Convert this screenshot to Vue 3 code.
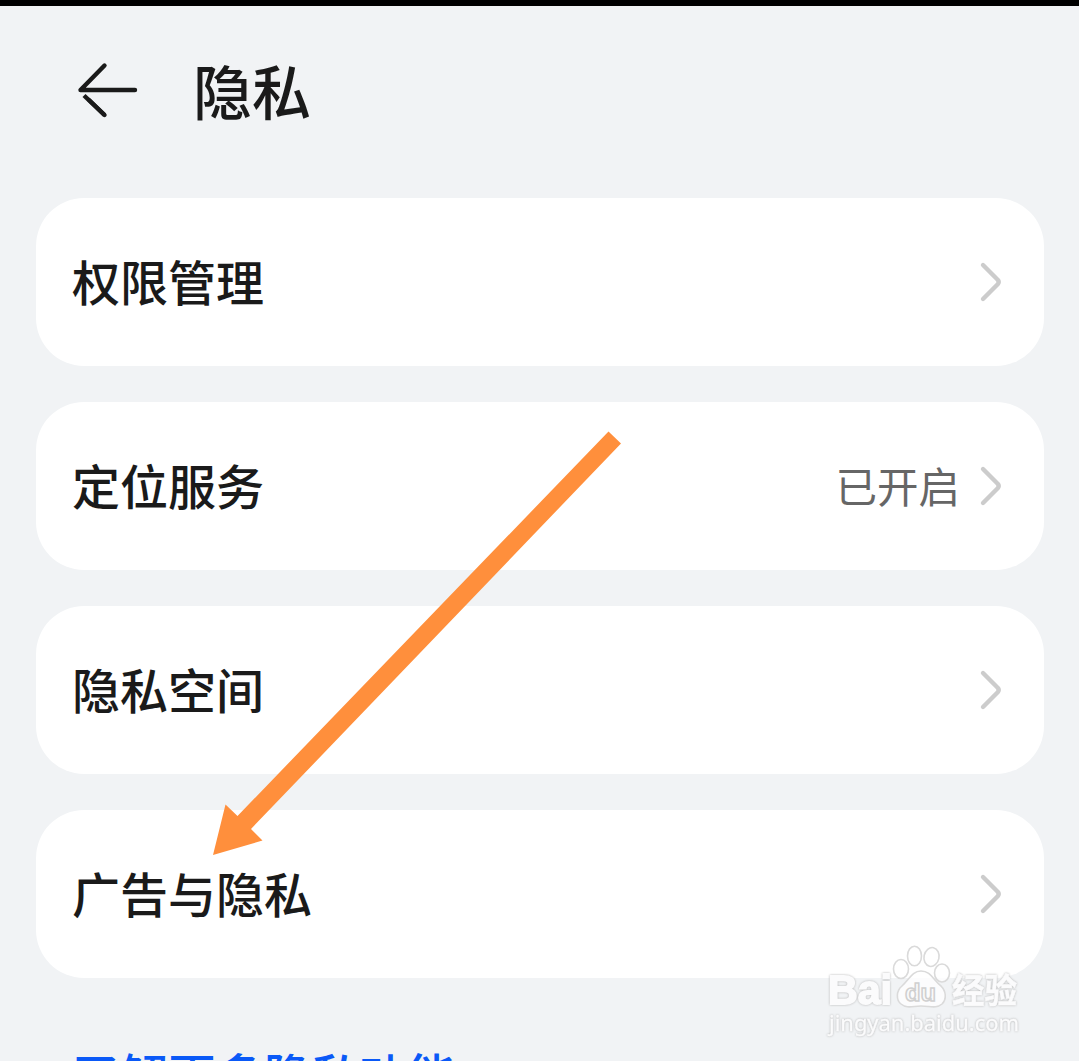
<script setup>
const items = [
  { label: '权限管理', status: '' },
  { label: '定位服务', status: '已开启' },
  { label: '隐私空间', status: '' },
  { label: '广告与隐私', status: '' },
]
</script>

<template>
  <div class="screen">
    <header class="header">
      <svg class="back" width="64" height="60" viewBox="0 0 64 60" fill="none" stroke="#1a1a1a" stroke-width="4.4" stroke-linecap="round" stroke-linejoin="round">
        <path d="M58 30H3.500L27.500 5.500" />
        <path d="M27.500 55L7 35.500" stroke-linecap="butt" />
        <path d="M27.500 55L12 40" />
      </svg>
      <h1 class="title">隐私</h1>
    </header>
    <main class="list">
      <section v-for="item in items" :key="item.label" class="card">
        <span class="label">{{ item.label }}</span>
        <span class="status">{{ item.status }}</span>
        <svg class="chevron" width="24" height="42" viewBox="0 0 24 42" fill="none" stroke="#ccc" stroke-width="4.4" stroke-linecap="round" stroke-linejoin="round">
          <path d="M4 4L18.700 18.700Q20.700 21 18.700 23.300L4 38" />
        </svg>
      </section>
    </main>
    <a class="more">了解更多隐私功能</a>

    <svg class="pointer" width="410" height="425" viewBox="212 431 410 425">
      <path d="M608.5 431.5L621 443.5L251 829L262.500 840.500L213 855L225.500 804.500L237.500 816Z" fill="#ff8f3c" />
    </svg>

    <svg class="watermark" width="230" height="121" viewBox="810 940 230 121">
      <g class="paw">
        <ellipse cx="901" cy="969" rx="7.500" ry="9.500" />
        <ellipse cx="914.500" cy="956" rx="7" ry="9.800" />
        <ellipse cx="931.500" cy="957" rx="7.500" ry="9.500" transform="rotate(12 931.5 957)" />
        <ellipse cx="942" cy="973" rx="7.500" ry="9" />
        <path d="M921 971C912 971 909 980 902 986C896 991 896 1000 901 1004C907 1009 913 1006 921 1006C930 1006 936 1009 942 1004C947 999 946 991 941 986C933 980 931 971 921 971Z" />
      </g>
      <text class="latin" x="828" y="1004" font-size="41" textLength="64" lengthAdjust="spacingAndGlyphs">Bai</text>
      <text class="du" x="905" y="1001" font-size="24" textLength="31" lengthAdjust="spacingAndGlyphs">du</text>
      <text class="cjk" x="952" y="1003" font-size="34" textLength="65" lengthAdjust="spacingAndGlyphs">经验</text>
      <text class="url" x="829" y="1031" font-size="22" textLength="190" lengthAdjust="spacingAndGlyphs">jingyan.baidu.com</text>
    </svg>
  </div>
</template>

<style>
body {
  background: #f1f3f5;
  overflow: hidden;
}
</style>

<style scoped>
.screen {
  position: relative;
  box-sizing: border-box;
  width: 1079px;
  height: 1061px;
  overflow: hidden;
  border-top: 6px solid #000;
  background: #f1f3f5;
  color: #1a1a1a;
  font-family: "Noto Sans CJK SC", sans-serif;
}
.header {
  box-sizing: border-box;
  height: 192px;
  padding: 54px 0 0 77px;
  display: flex;
  align-items: flex-start;
}
.title {
  margin: -8px 0 0 52px;
  font-size: 59px;
  line-height: 76px;
  font-weight: 500;
}
.list {
  display: flex;
  flex-direction: column;
  gap: 36px;
  padding: 0 35px 0 36px;
}
.card {
  box-sizing: border-box;
  height: 168px;
  padding: 0 41px 0 36px;
  border-radius: 48px;
  background: #fff;
  display: flex;
  align-items: center;
}
.label {
  flex: 1;
  padding-bottom: 4px;
  font-size: 48px;
  line-height: 64px;
  font-weight: 500;
}
.status {
  margin-right: 19px;
  padding-bottom: 2px;
  color: #666;
  font-size: 41.5px;
  line-height: 56px;
}
.more {
  display: block;
  margin: 59px 0 0 72px;
  color: #0a59f7;
  font-size: 48px;
  line-height: 72px;
  font-weight: 500;
}
.pointer {
  position: absolute;
  left: 212px;
  top: 425px;
}
.watermark {
  position: absolute;
  left: 810px;
  top: 934px;
}
.paw {
  fill: #fff;
  fill-opacity: 0.75;
  stroke: #dadada;
  stroke-width: 1.6;
}
.latin,
.cjk,
.url {
  fill: #fbfbfc;
  stroke: #fbfbfc;
  filter: drop-shadow(0 0 1px #b4b4b4);
}
.latin {
  font-family: "Liberation Sans", sans-serif;
  font-weight: 700;
  stroke-width: 1.8;
}
.du {
  fill: #fbfbfc;
  stroke: #d0d0d0;
  stroke-width: 1.5;
  font-family: "Liberation Sans", sans-serif;
  font-weight: 700;
}
.cjk {
  font-family: "Noto Sans CJK SC", sans-serif;
  font-weight: 700;
  stroke-width: 0.5;
}
.url {
  font-family: "Noto Sans", sans-serif;
  font-weight: 400;
  stroke-width: 0.3;
}
</style>
